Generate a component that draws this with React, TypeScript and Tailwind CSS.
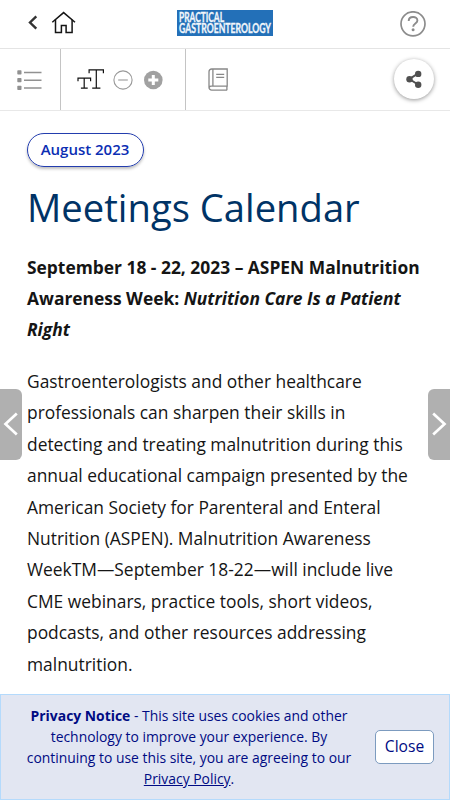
import React from 'react';

const bodyLines = [
  'Gastroenterologists and other healthcare',
  'professionals can sharpen their skills in',
  'detecting and treating malnutrition during this',
  'annual educational campaign presented by the',
  'American Society for Parenteral and Enteral',
  'Nutrition (ASPEN). Malnutrition Awareness',
  'WeekTM—September 18-22—will include live',
  'CME webinars, practice tools, short videos,',
  'podcasts, and other resources addressing',
  'malnutrition.',
];

const Logo: React.FC = () => (
  <svg width="96" height="26" viewBox="0 0 96 26" className="bg-[#2370b8]" aria-label="Practical Gastroenterology">
    <g
      fill="#f1f6fb"
      stroke="#f1f6fb"
      strokeWidth="0.25"
      fontFamily="Lato, 'Liberation Sans', sans-serif"
      fontWeight="700"
      fontSize="9.5"
      transform="scale(1 1.36)"
    >
      <text x="2" y="8.8" textLength="45" lengthAdjust="spacingAndGlyphs">PRACTICAL</text>
      <text x="2" y="17.1" textLength="92" lengthAdjust="spacingAndGlyphs">GASTROENTEROLOGY</text>
    </g>
  </svg>
);

const TopBar: React.FC = () => (
  <header className="flex h-[49px] shrink-0 items-start border-b border-[#e4e4e4]">
    <button className="ml-[27px] mt-[14px]" aria-label="Back">
      <svg width="12" height="17" viewBox="0 0 12 17" fill="none" stroke="#333" strokeWidth="2.4">
        <path d="M9.3 2.3 3 8.5l6.3 6.2" />
      </svg>
    </button>
    <button className="ml-[12px] mt-[11px]" aria-label="Home">
      <svg width="25" height="23" viewBox="0 0 25 23" fill="none" stroke="#151515" strokeWidth="1.5">
        <path d="M1.3 11.3 12.6 1.6 24 11.3" />
        <path d="M4.5 8.8v12.7h5.9v-6.9h4.7v6.9h6V8.8" />
      </svg>
    </button>
    <div className="ml-[101px] mt-[10px]">
      <Logo />
    </div>
    <button className="ml-[127px] mt-[11px]" aria-label="Help">
      <svg width="26" height="26" viewBox="0 0 26 26" fill="none" stroke="#8c8c8c">
        <circle cx="13" cy="12.8" r="12" strokeWidth="1.7" />
        <path d="M8.7 9.9c0-5.2 8.7-5.2 8.7-.5 0 3.1-4.2 3.1-4.2 6.4" strokeWidth="1.9" />
        <circle cx="13.1" cy="18.8" r="1.5" fill="#8c8c8c" stroke="none" />
      </svg>
    </button>
  </header>
);

const ToolBar: React.FC = () => (
  <div className="flex h-[62px] shrink-0 border-b border-[#e8e8e8]">
    <div className="flex w-[61px] items-center border-r border-[#c4c4c4] pl-[17px]">
      <svg width="26" height="22" viewBox="0 0 26 22">
        <g fill="#919191">
          <rect x="0.3" y="1.3" width="4.2" height="4.2" rx="0.7" />
          <rect x="0.3" y="9" width="4.2" height="4.2" rx="0.7" />
          <rect x="0.3" y="16.8" width="4.2" height="4.2" rx="0.7" />
        </g>
        <path d="M7 3.5h17.5M7 11.2h17.5M7 19h17.5" stroke="#919191" strokeWidth="1.4" />
      </svg>
    </div>
    <div className="flex w-[125px] items-center border-r border-[#c4c4c4] pl-[16px]">
      <svg width="29" height="22" viewBox="0 0 29 22" fill="none" stroke="#111" strokeWidth="1.2">
        <path d="M12.1 4.3V0.9h14.3v3.4M19.3 0.9v18.2M15.2 19.1h8.2" />
        <path d="M1 12.2V9.1h12.6v3.1M7.2 9.1v10M3.9 19.1h6.8" />
      </svg>
      <svg className="ml-[7px]" width="20" height="20" viewBox="0 0 20 20" fill="none" stroke="#999" strokeWidth="1.1">
        <circle cx="10" cy="10" r="9.1" />
        <path d="M5.2 10h9.6" />
      </svg>
      <svg className="ml-[11px]" width="20" height="20" viewBox="0 0 20 20">
        <circle cx="9.3" cy="10" r="9.3" fill="#a1a1a1" />
        <path d="M4.3 10h10M9.3 5v10" stroke="#fff" strokeWidth="3" />
      </svg>
    </div>
    <div className="flex grow items-center pl-[22px]">
      <svg width="21" height="23" viewBox="0 0 21 23" fill="none" stroke="#888" strokeWidth="1.3">
        <path d="M19.2 22.1H3.7A2.7 2.7 0 0 1 1 19.4V3.7A2.7 2.7 0 0 1 3.7 1h15.5v17.2H3.7a2 2 0 0 0-2.6 1.6M18.9 18.2v3.9" />
        <path d="M4.9 1v17M8.2 6.3h8M8.2 9.4h8" />
      </svg>
    </div>
    <button
      className="mr-[16px] mt-[10px] flex size-[40px] items-center justify-center rounded-full bg-white shadow-[0_1px_4px_rgba(0,0,0,0.42)]"
      aria-label="Share"
    >
      <svg width="18" height="20" viewBox="0 0 18 20" fill="#505050">
        <path d="m13 4.5-8.7 5.6 8.7 5.4" fill="none" stroke="#505050" strokeWidth="2" />
        <circle cx="13.2" cy="4.9" r="3.2" />
        <circle cx="4.5" cy="10.2" r="3.2" />
        <circle cx="13.2" cy="15.7" r="3.2" />
      </svg>
    </button>
  </div>
);

const PrivacyNotice: React.FC = () => (
  <footer className="absolute inset-x-0 bottom-0 flex h-[106px] items-center border border-[#b4dafc] bg-[#e2e6f2] text-[#000b83]">
    <p className="ml-[21px] w-[334px] whitespace-nowrap text-center text-[13.9px] leading-[21px]">
      <b>Privacy Notice</b> - This site uses cookies and other
      <br />
      technology to improve your experience. By
      <br />
      continuing to use this site, you are agreeing to our
      <br />
      <span className="underline">Privacy Policy</span>.
    </p>
    <button className="ml-[19px] h-[34px] w-[59px] rounded-[5px] border border-[#7c9bbf] bg-white text-[15.6px]">
      Close
    </button>
  </footer>
);

const App: React.FC = () => {
  return (
    <div className="relative flex h-[800px] w-[450px] flex-col overflow-hidden bg-white font-['Open_Sans',sans-serif]">
      <TopBar />
      <ToolBar />

      <main className="flex flex-col items-start whitespace-nowrap pl-[27px] pt-[22px]">
        <span className="flex h-[34px] w-[117px] items-center justify-center rounded-full border border-[#233dae] pb-[1px] pr-[1px] text-[15px] font-semibold text-[#0b2eb3] shadow-[0_2px_3px_rgba(0,0,0,0.25)]">
          August 2023
        </span>
        <h1 className="mt-[12px] text-[38.2px] leading-[56px] text-[#003366]">Meetings Calendar</h1>
        <p className="mt-[17px] text-[17.4px] font-bold leading-[31px] text-[#151515]">
          September 18 - 22, 2023 – ASPEN Malnutrition
          <br />
          Awareness Week: <em>Nutrition Care Is a Patient</em>
          <br />
          <em>Right</em>
        </p>
        <p className="mt-[21px] text-[17.4px] leading-[31.4px] text-[#151515]">
          {bodyLines.map((line) => (
            <span key={line} className="block">
              {line}
            </span>
          ))}
        </p>
      </main>

      {/* previous / next page handles, floating over the article */}
      <button className="absolute left-0 top-[389px] h-[71px] w-[22px] rounded-r-[6px] bg-[#b0b0b0]" aria-label="Previous">
        <svg width="22" height="71" viewBox="0 0 22 71" fill="none" stroke="#fff" strokeWidth="2.7">
          <path d="M16.8 24.5 5.5 35l11.3 10.5" />
        </svg>
      </button>
      <button className="absolute right-0 top-[389px] h-[71px] w-[22px] rounded-l-[6px] bg-[#b0b0b0]" aria-label="Next">
        <svg width="22" height="71" viewBox="0 0 22 71" fill="none" stroke="#fff" strokeWidth="2.7">
          <path d="M5.2 24.5 16.5 35 5.2 45.5" />
        </svg>
      </button>

      <PrivacyNotice />
    </div>
  );
};

export default App;
